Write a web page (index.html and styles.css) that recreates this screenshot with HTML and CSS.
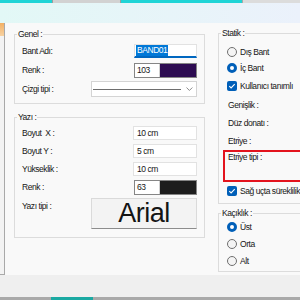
FILE: index.html
```html
<!DOCTYPE html>
<html lang="tr">
  <head>
    <meta charset="UTF-8" />
    <title>Bant Özellikleri</title>
    <link rel="stylesheet" href="styles.css">
  </head>
  <body>
    <div class="tabstrip">
      <span class="tab tab-a"></span>
      <span class="tab tab-b"></span>
      <span class="tab tab-c"></span>
      <span class="tab tab-d"></span>
    </div>
    <div class="ribbon"></div>

    <div class="main">
      <div class="rail"></div>
      <div class="content">
        <div class="col col-left">
          <fieldset class="group group-genel">
            <legend>Genel :</legend>
            <div class="row">
              <span class="lbl">Bant Adı:</span>
              <span class="field field-focus"><span class="sel">BAND01</span></span>
            </div>
            <div class="row">
              <span class="lbl">Renk :</span>
              <span class="color">
                <span class="color-num">103</span>
                <span class="swatch swatch-purple"></span>
              </span>
            </div>
            <div class="row">
              <span class="lbl">Çizgi tipi :</span>
              <span class="combo">
                <span class="combo-line"></span>
                <svg class="chevron" width="7" height="4" viewBox="0 0 7 4">
                  <path d="M0.5 0.5l3 3 3-3" stroke="#8a8a8a" stroke-width="1" fill="none" />
                </svg>
              </span>
            </div>
          </fieldset>

          <fieldset class="group group-yazi">
            <legend>Yazı :</legend>
            <div class="row">
              <span class="lbl">Boyut&nbsp; X :</span>
              <span class="field">10 cm</span>
            </div>
            <div class="row">
              <span class="lbl">Boyut Y :</span>
              <span class="field">5 cm</span>
            </div>
            <div class="row">
              <span class="lbl">Yükseklik :</span>
              <span class="field">10 cm</span>
            </div>
            <div class="row">
              <span class="lbl">Renk :</span>
              <span class="color">
                <span class="color-num">63</span>
                <span class="swatch swatch-black"></span>
              </span>
            </div>
            <div class="row row-font">
              <span class="lbl">Yazı tipi :</span>
              <button class="font-btn">Arial</button>
            </div>
          </fieldset>
        </div>

        <div class="col col-right">
          <fieldset class="group group-statik">
            <legend>Statik :</legend>
            <div class="opt opt-first"><span class="radio"></span>Dış Bant</div>
            <div class="opt"><span class="radio on"></span>İç Bant</div>
            <div class="opt opt-check">
              <span class="check">
                <svg width="8" height="8" viewBox="0 0 8 8">
                  <path d="M1.3 4.2l1.8 1.8 3.6-3.8" stroke="#fff" stroke-width="1.1" fill="none" />
                </svg>
              </span>Kullanıcı tanımlı
            </div>
            <div class="info info-first">Genişlik :</div>
            <div class="info">Düz donatı :</div>
            <div class="info">Etriye :</div>
            <div class="alert-box">Etriye tipi :</div>
            <div class="opt opt-after">
              <span class="check">
                <svg width="8" height="8" viewBox="0 0 8 8">
                  <path d="M1.3 4.2l1.8 1.8 3.6-3.8" stroke="#fff" stroke-width="1.1" fill="none" />
                </svg>
              </span>Sağ uçta süreklilik
            </div>
          </fieldset>

          <fieldset class="group group-kacik">
            <legend>Kaçıklık :</legend>
            <div class="opt opt-tight opt-top"><span class="radio on"></span>Üst</div>
            <div class="opt opt-tight"><span class="radio"></span>Orta</div>
            <div class="opt opt-tight"><span class="radio"></span>Alt</div>
          </fieldset>
        </div>
      </div>
    </div>

    <div class="footer"></div>
    <div class="taskbar">
      <span class="tb tb-a"></span>
      <span class="tb tb-b"></span>
      <span class="tb tb-c"></span>
    </div>
  </body>
</html>
```

FILE: styles.css
```css
body {
  margin: 0;
  width: 300px;
  height: 300px;
  overflow: hidden;
  font-family: "Liberation Sans", Arial, sans-serif;
  font-size: 8.5px;
  letter-spacing: -0.45px;
  color: #161616;
  background: #efefef;
}

.tabstrip {
  display: flex;
  height: 3px;
}

.tab-a {
  width: 52px;
  background: #1fd4d6;
}

.tab-b {
  width: 67px;
  background: #d2d2d2;
  border-left: 1px solid #9c9c9c;
  border-right: 1px solid #9c9c9c;
}

.tab-c {
  width: 121px;
  background: #1fd4d6;
}

.tab-d {
  flex: 1;
  background: #dcdcdc;
  border-left: 1px solid #a8a8a8;
}

.ribbon {
  height: 20px;
  background: linear-gradient(to right, #e2f8f6, #ebf1fb);
}

.main {
  display: flex;
  height: 252px;
  background: #f9f9f9;
  overflow: hidden;
}

.rail {
  flex: none;
  width: 4px;
  border-right: 1px solid #a9a9a9;
  border-bottom: 1px solid #a9a9a9;
  background: linear-gradient(#f3b063, #f7d2a2) top / 100% 13px no-repeat,
    #f3f3f3;
}

.content {
  display: flex;
  gap: 13px;
  padding: 5px 0 0 9px;
}

.col {
  flex: none;
  display: flex;
  flex-direction: column;
}

.col-left {
  width: 191px;
  gap: 7px;
}

.col-right {
  width: 110px;
  gap: 3px;
  margin-top: -1px;
}

.group {
  margin: 0;
  min-width: 0;
  border: 1px solid #dcdcdc;
  box-sizing: border-box;
}

.group legend {
  padding: 0 1px;
  line-height: 12px;
}

.group-genel,
.group-yazi {
  padding: 2px 7px 5px 7px;
}

.group-genel legend,
.group-yazi legend {
  margin-left: -5px;
}

.group-genel .row + .row {
  margin-top: 1px;
}

.group-yazi {
  padding-top: 1px;
  padding-bottom: 8px;
}

.row {
  display: flex;
  align-items: center;
  justify-content: space-between;
  height: 18px;
}

.row-font {
  height: 31px;
  margin-top: 2px;
  align-items: flex-start;
}

.row-font .lbl {
  padding-top: 3px;
}

.field {
  box-sizing: border-box;
  width: 64px;
  height: 14px;
  padding: 0 3px;
  background: #fff;
  border: 1px solid #e2e2e2;
  line-height: 12px;
}

.field-focus {
  width: 63px;
  padding: 0 0 0 1px;
  border-bottom: 2px solid #0067c0;
  line-height: 11px;
}

.sel {
  display: inline-block;
  padding: 0 1px;
  background: #0078d7;
  color: #fff;
}

.color {
  display: flex;
  box-sizing: border-box;
  width: 63px;
  height: 15px;
  border: 1px solid #858585;
  background: #fff;
}

.color-num {
  width: 22px;
  padding-left: 2px;
  line-height: 13px;
  border-right: 1px solid #d0d0d0;
}

.swatch {
  flex: 1;
}

.swatch-purple {
  background: #2d0c52;
}

.swatch-black {
  background: #1d1d1d;
}

.combo {
  display: flex;
  align-items: center;
  gap: 5px;
  box-sizing: border-box;
  width: 106px;
  height: 16px;
  padding: 0 3px 0 1px;
  background: #fff;
  border: 1px solid #d4d4d4;
}

.combo-line {
  width: 90px;
  height: 1px;
  background: #6e6e6e;
}

.font-btn {
  box-sizing: border-box;
  width: 106px;
  height: 31px;
  margin: 0;
  padding: 0;
  background: #f3f3f3;
  border: 1px solid #dadada;
  border-bottom-color: #8c8c8c;
  border-radius: 0;
  font-family: "Liberation Sans", Arial, sans-serif;
  font-size: 27px;
  letter-spacing: -0.5px;
  line-height: 29px;
  color: #141414;
}

.group-statik,
.group-kacik {
  padding: 0 0 4px 4px;
}

.group-statik legend,
.group-kacik legend {
  margin-left: -2px;
}

.opt {
  display: flex;
  align-items: center;
  gap: 3px;
  height: 16px;
  padding-left: 4px;
}

.opt-first {
  margin-top: 5px;
}

.opt-check {
  margin-top: 2px;
}

.opt-after {
  margin-top: 1px;
}

.opt-tight {
  height: 17px;
}

.opt-top {
  margin-top: -1px;
}

.group-kacik {
  padding-bottom: 2px;
}

.radio {
  flex: none;
  box-sizing: border-box;
  width: 10px;
  height: 10px;
  border: 1px solid #6f6f6f;
  border-radius: 50%;
  background: #f4f4f4;
}

.radio.on {
  border: 3px solid #005fb8;
  background: #fff;
}

.check {
  flex: none;
  display: flex;
  align-items: center;
  justify-content: center;
  width: 10px;
  height: 10px;
  border-radius: 2px;
  background: #005fb8;
}

.info {
  height: 18px;
  line-height: 18px;
  padding-left: 5px;
}

.info-first {
  margin-top: 2px;
}

.alert-box {
  box-sizing: border-box;
  height: 32px;
  padding-left: 3px;
  line-height: 11px;
  border: 2px solid #e3131d;
}

.footer {
  height: 22px;
  background: #efefef;
}

.taskbar {
  display: flex;
  height: 3px;
  background: #a9a9a9;
}

.tb-a {
  width: 51px;
}

.tb-b {
  width: 42px;
  background: #1ba9a2;
}

.tb-c {
  width: 115px;
  margin-left: 0;
}
```
